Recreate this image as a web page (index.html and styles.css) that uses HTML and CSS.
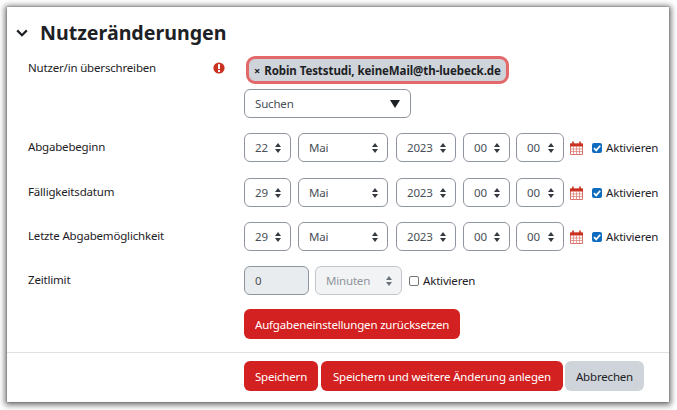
FILE: index.html
```html
<!DOCTYPE html>
<html lang="de">
  <head>
  <meta charset="utf-8">
  <title>Nutzeränderungen</title>
  <link rel="stylesheet" href="styles.css">
  </head>
  <body>

<div class="panel">

  <h2 class="section-title">
    <svg class="chevron" viewBox="0 0 12 8" width="12" height="8"><path d="M1.2 1.4 6 6.2l4.8-4.8" fill="none" stroke="#1d2125" stroke-width="2.2"/></svg>
    Nutzeränderungen
  </h2>

  <div class="row row-user">
    <div class="label">Nutzer/in überschreiben
      <svg class="alert" viewBox="0 0 12 12" width="12" height="12"><circle cx="6" cy="6" r="5.6" fill="#ca3120"/><rect x="5" y="2.2" width="2" height="4.8" fill="#fff"/><rect x="5" y="8" width="2" height="2" fill="#fff"/></svg>
    </div>
    <div class="control user-control">
      <span class="chip"><span class="chip-x">×</span>Robin Teststudi, keineMail@th-luebeck.de</span>
      <div class="search">Suchen <span class="search-arrow"></span></div>
    </div>
  </div>

  <div class="row row-date">
    <div class="label">Abgabebeginn</div>
    <div class="control">
      <span class="sel w-day">22</span>
      <span class="sel w-month">Mai</span>
      <span class="sel w-year">2023</span>
      <span class="sel w-hour">00</span>
      <span class="sel w-min">00</span>
      <svg class="cal" viewBox="0 0 13 14" width="13" height="14"><path d="M.5 3h12v10.500H.5z" fill="#fff" stroke="#d9736a"/><path d="M0 2.500h13v3H0z" fill="#ca3120"/><path d="M3 .5v3M10 .5v3" stroke="#ca3120" stroke-width="1.600"/><path d="M.5 8h12M.5 10.500h12M3.500 5.500v8M6.500 5.500v8M9.500 5.500v8" stroke="#e0877e" stroke-width=".8"/></svg>
      <label class="check"><span class="box on"><svg viewBox="0 0 10 10" width="10" height="10"><path d="M2 5.200 4.200 7.400 8.200 2.800" fill="none" stroke="#fff" stroke-width="1.700"/></svg></span>Aktivieren</label>
    </div>
  </div>

  <div class="row row-date">
    <div class="label">Fälligkeitsdatum</div>
    <div class="control">
      <span class="sel w-day">29</span>
      <span class="sel w-month">Mai</span>
      <span class="sel w-year">2023</span>
      <span class="sel w-hour">00</span>
      <span class="sel w-min">00</span>
      <svg class="cal" viewBox="0 0 13 14" width="13" height="14"><path d="M.5 3h12v10.500H.5z" fill="#fff" stroke="#d9736a"/><path d="M0 2.500h13v3H0z" fill="#ca3120"/><path d="M3 .5v3M10 .5v3" stroke="#ca3120" stroke-width="1.600"/><path d="M.5 8h12M.5 10.500h12M3.500 5.500v8M6.500 5.500v8M9.500 5.500v8" stroke="#e0877e" stroke-width=".8"/></svg>
      <label class="check"><span class="box on"><svg viewBox="0 0 10 10" width="10" height="10"><path d="M2 5.200 4.200 7.400 8.200 2.800" fill="none" stroke="#fff" stroke-width="1.700"/></svg></span>Aktivieren</label>
    </div>
  </div>

  <div class="row row-date">
    <div class="label">Letzte Abgabemöglichkeit</div>
    <div class="control">
      <span class="sel w-day">29</span>
      <span class="sel w-month">Mai</span>
      <span class="sel w-year">2023</span>
      <span class="sel w-hour">00</span>
      <span class="sel w-min">00</span>
      <svg class="cal" viewBox="0 0 13 14" width="13" height="14"><path d="M.5 3h12v10.500H.5z" fill="#fff" stroke="#d9736a"/><path d="M0 2.500h13v3H0z" fill="#ca3120"/><path d="M3 .5v3M10 .5v3" stroke="#ca3120" stroke-width="1.600"/><path d="M.5 8h12M.5 10.500h12M3.500 5.500v8M6.500 5.500v8M9.500 5.500v8" stroke="#e0877e" stroke-width=".8"/></svg>
      <label class="check"><span class="box on"><svg viewBox="0 0 10 10" width="10" height="10"><path d="M2 5.200 4.200 7.400 8.200 2.800" fill="none" stroke="#fff" stroke-width="1.700"/></svg></span>Aktivieren</label>
    </div>
  </div>

  <div class="row row-limit">
    <div class="label">Zeitlimit</div>
    <div class="control">
      <span class="num">0</span>
      <span class="sel w-unit disabled">Minuten</span>
      <label class="check check-limit"><span class="box"></span>Aktivieren</label>
    </div>
  </div>

  <div class="row row-reset">
    <div class="label"></div>
    <div class="control"><span class="btn red">Aufgabeneinstellungen zurücksetzen</span></div>
  </div>

  <div class="actions">
    <span class="btn red w-save">Speichern</span>
    <span class="btn red w-more">Speichern und weitere Änderung anlegen</span>
    <span class="btn grey w-cancel">Abbrechen</span>
  </div>

</div>

  </body>
</html>
```

FILE: styles.css
```css
html, body {margin:0; padding:0; background:#fff;}
body {width:677px; height:410px; overflow:hidden; font:11.5px "Noto Sans", "Open Sans", Arial, sans-serif; letter-spacing:-.18px; color:#1d2125;}

.panel {box-sizing:border-box; width:662px; height:395px; margin:7px 0 0 7px; background:#fff; box-shadow:0 0 1px #444, 0 1px 6px 2px #707070;}

.section-title {display:flex; align-items:center; margin:0; padding:9px 0 0 9px; height:33px; box-sizing:content-box; font-size:19.6px; font-weight:700; line-height:33px; letter-spacing:0;}
.chevron {margin-right:12px;}

.row {display:flex; padding-left:21px;}
.label {box-sizing:border-box; width:216px; padding:0 19px 2px 0; display:flex; justify-content:space-between; align-items:center; line-height:18px;}
.control {display:flex; align-items:center;}

.row-user {margin-top:7px;}
.row-user .label {height:24px; padding:0 19px 0 0;}
.user-control {flex-direction:column; align-items:flex-start;}
.chip {box-sizing:border-box; display:flex; align-items:center; width:263px; height:28px; margin-left:2px; padding-left:5px; background:#ced4da; border:3px solid #e2686a; border-radius:9px; font-weight:700; letter-spacing:-.08px; white-space:pre;}
.chip-x {font-size:11px; margin-right:4px;}
.search {box-sizing:border-box; display:flex; justify-content:space-between; align-items:center; width:167px; height:29px; margin-top:5px; padding:0 10px 0 10px; border:1px solid #8f959e; border-radius:6px; color:#495057;}
.search-arrow {width:0; height:0; border-style:solid; border-width:8px 5px 0; border-color:#1d2125 transparent transparent;}

.row-date {margin-top:15px;}
.row-date:nth-of-type(3) {margin-top:16px;}
.row-limit {margin-top:15px;}
.row-reset {margin-top:14px;}

.sel {box-sizing:border-box; position:relative; display:flex; align-items:center; height:29px; margin-right:7px; padding-left:10px; border:1px solid #8f959e; border-radius:6px; color:#495057;}
.sel:before, .sel:after {content:""; position:absolute; right:9px; width:0; height:0; border-style:solid; border-color:transparent;}
.sel:before {top:9px; border-width:0 3px 4px; border-bottom-color:#343a40;}
.sel:after {top:15px; border-width:4px 3px 0; border-top-color:#343a40;}
.w-day {width:47px;}
.w-month {width:90px; margin-right:8px;}
.w-year {width:60px;}
.w-hour {width:47px; margin-right:6px;}
.w-min {width:48px; margin-right:6px;}
.w-unit {width:87px; margin-right:7px;}
.disabled {background:#f1f3f4; border-color:#c3c7cc; color:#8f959e;}
.disabled:before {border-bottom-color:#6a737b;}
.disabled:after {border-top-color:#6a737b;}

.num {box-sizing:border-box; display:flex; align-items:center; width:65px; height:29px; margin-right:6px; padding-left:10px; background:#e9ecef; border:1px solid #8f959e; border-radius:6px; color:#495057;}

.cal {flex:none;}
.check {display:flex; align-items:center; margin-left:9px; white-space:nowrap;}
.check-limit {margin-left:0;}
.box {box-sizing:border-box; display:flex; width:10px; height:10px; margin-right:4px; border:1px solid #767676; border-radius:2px; background:#fff;}
.box.on {background:#0f6cbf; border:0;}

.btn {box-sizing:border-box; display:inline-flex; align-items:center; justify-content:center; height:30px; padding:0 11px; border-radius:6px; white-space:nowrap;}
.red {background:#d32020; color:#fff;}
.grey {background:#ced4da; color:#1d2125;}
.w-save {width:74px;}
.w-more {width:242px; margin-right:-1px;}
.w-cancel {width:79px;}

.actions {display:flex; gap:3px; margin-top:13px; padding:8px 0 0 237px; border-top:1px solid #dee2e6;}
```
